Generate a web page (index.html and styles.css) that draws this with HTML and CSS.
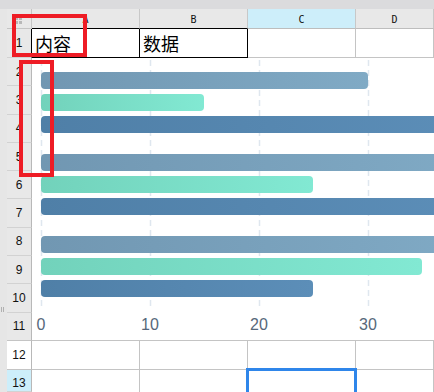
FILE: index.html
```html
<!DOCTYPE html>
<html lang="zh">
<head>
    <meta charset="UTF-8">
    <meta name="viewport" content="width=device-width, initial-scale=1.0">
    <title>数据表</title>
    <link rel="stylesheet" href="styles.css">
</head>
<body>
    <div class="topbar"></div>

    <div class="sheet">
        <div class="strip"><span class="grip"></span></div>

        <!-- column headers -->
        <div class="corner">
            <span class="handle"><i></i><i></i><i></i><i></i></span>
        </div>
        <div class="col-head boxed-top">A</div>
        <div class="col-head boxed-top">B</div>
        <div class="col-head active">C</div>
        <div class="col-head">D</div>

        <!-- row 1 -->
        <div class="row-head boxed-left">1</div>
        <div class="cell boxed">内容</div>
        <div class="cell boxed">数据</div>
        <div class="cell"></div>
        <div class="cell"></div>

        <!-- rows 2-11, chart sits over the cells -->
        <div class="row-head r2">2</div>
        <div class="row-head r3">3</div>
        <div class="row-head r4">4</div>
        <div class="row-head r5">5</div>
        <div class="row-head r6">6</div>
        <div class="row-head r7">7</div>
        <div class="row-head r8">8</div>
        <div class="row-head r9">9</div>
        <div class="row-head r10">10</div>
        <div class="row-head r11">11</div>

        <div class="chart">
            <svg width="402" height="283" viewBox="0 0 402 283">
                <defs>
                    <linearGradient id="g-slate"><stop offset="0" stop-color="#7197b2"/><stop offset="1" stop-color="#80aac5"/></linearGradient>
                    <linearGradient id="g-mint"><stop offset="0" stop-color="#72d2bb"/><stop offset="1" stop-color="#82e9d3"/></linearGradient>
                    <linearGradient id="g-steel"><stop offset="0" stop-color="#4f7fa7"/><stop offset="1" stop-color="#5c8eb8"/></linearGradient>
                </defs>
                <g class="gridlines">
                    <line x1="9.5" y1="2" x2="9.5" y2="248"/>
                    <line x1="118.5" y1="2" x2="118.5" y2="248"/>
                    <line x1="227.5" y1="2" x2="227.5" y2="248"/>
                    <line x1="336.5" y1="2" x2="336.5" y2="248"/>
                </g>
                <g>
                    <rect x="9" y="14" width="327" height="17" rx="4" fill="url(#g-slate)"/>
                    <rect x="9" y="36" width="163" height="17" rx="4" fill="url(#g-mint)"/>
                    <rect x="9" y="58" width="430" height="17" rx="4" fill="url(#g-steel)"/>

                    <rect x="9" y="96" width="430" height="17" rx="4" fill="url(#g-slate)"/>
                    <rect x="9" y="118" width="272" height="17" rx="4" fill="url(#g-mint)"/>
                    <rect x="9" y="140" width="430" height="17" rx="4" fill="url(#g-steel)"/>

                    <rect x="9" y="178" width="430" height="17" rx="4" fill="url(#g-slate)"/>
                    <rect x="9" y="200" width="381" height="17" rx="4" fill="url(#g-mint)"/>
                    <rect x="9" y="222" width="272" height="17" rx="4" fill="url(#g-steel)"/>
                </g>
                <g class="axis">
                    <text x="9" y="272">0</text>
                    <text x="118" y="272">10</text>
                    <text x="227" y="272">20</text>
                    <text x="336" y="272">30</text>
                </g>
            </svg>
        </div>

        <!-- row 12 -->
        <div class="row-head plain">12</div>
        <div class="cell"></div>
        <div class="cell"></div>
        <div class="cell"></div>
        <div class="cell"></div>

        <!-- row 13, cut by the window -->
        <div class="row-head active">13</div>
        <div class="cell open"></div>
        <div class="cell open"></div>
        <div class="cell open selected"></div>
        <div class="cell open"></div>
    </div>

    <div class="mark mark-head"></div>
    <div class="mark mark-axis"></div>
</body>
</html>
```

FILE: styles.css
```css
* {
    margin: 0;
    padding: 0;
    box-sizing: border-box;
}
body {
    background: white;
    width: 434px;
    height: 392px;
    overflow: hidden;
    position: relative;
    font-family: "Liberation Sans", Arial, sans-serif;
}
.topbar {
    height: 9px;
    background: #dbdbdd;
}
.sheet {
    display: grid;
    grid-template-columns: 7px 25px 108px 108px 108px 1fr;
    grid-template-rows: 20px 29px repeat(10, 28.3px) 29px 22px;
}
.strip {
    grid-column: 1;
    grid-row: 1 / -1;
    background: #e6e6e6;
    padding-top: 298px;
    padding-left: 1px;
}
.grip {
    display: block;
    width: 3px;
    height: 5px;
    border-left: 1px solid #b0b0b0;
    border-right: 1px solid #b0b0b0;
}
.corner {
    background: #e8e8e8;
    border-right: 1px solid #c4c4c4;
    border-bottom: 1px solid #c4c4c4;
    padding: 8px 0 0 8px;
}
.handle {
    display: grid;
    grid-template-columns: 3px 3px;
    gap: 1px;
}
.handle i {
    display: block;
    height: 3px;
    background: #b8b8b8;
}
.col-head {
    background: #e8e8e8;
    border-right: 1px solid #c8c8c8;
    border-bottom: 1px solid #bdbdbd;
    font-family: "DejaVu Sans Mono", monospace;
    font-size: 10px;
    color: #111;
    display: flex;
    align-items: center;
    justify-content: center;
    padding-top: 2px;
}
.col-head.active {
    background: #cdeefa;
}
.boxed-top {
    border-bottom-color: #000;
}
.row-head {
    grid-column: 2;
    background: #e8e8e8;
    border-right: 1px solid #b8b8b8;
    border-bottom: 1px solid #d2d2d2;
    font-size: 12px;
    color: #111;
    display: flex;
    align-items: center;
    justify-content: center;
}
.row-head.plain {
    background: #fff;
    border-bottom-color: #c4c4c4;
}
.row-head.active {
    background: #cdeefa;
    padding-top: 6px;
}
.boxed-left {
    border-right-color: #000;
}
.r11 {
    border-bottom-color: #c4c4c4;
}
.cell {
    border-right: 1px solid #c4c4c4;
    border-bottom: 1px solid #c4c4c4;
    font-family: "Noto Sans CJK SC", sans-serif;
    font-size: 18px;
    line-height: 1;
    padding: 5px 0 0 3px;
}
.cell.open {
    border-bottom: 0;
}
.cell.boxed {
    border-color: #000;
}
.cell.selected {
    position: relative;
}
.cell.selected::after {
    content: "";
    position: absolute;
    top: -2px;
    left: -2px;
    right: -2px;
    bottom: 0;
    border: 3px solid #2f86ea;
    border-bottom: 0;
}
.chart {
    grid-column: 3 / -1;
    grid-row: 3 / 13;
    background: #fff;
    border-bottom: 1px solid #c4c4c4;
    overflow: hidden;
}
.chart svg {
    display: block;
}
.gridlines line {
    stroke: #dfe7ef;
    stroke-width: 1.5;
    stroke-dasharray: 6 4;
}
.axis text {
    font-family: "Liberation Sans", Arial, sans-serif;
    font-size: 16px;
    fill: #57687a;
    text-anchor: middle;
}

/* red annotation boxes */
.mark {
    position: absolute;
    border: 4px solid #ee1c25;
}
.mark-head {
    left: 12px;
    top: 14px;
    width: 75px;
    height: 43px;
}
.mark-axis {
    left: 19px;
    top: 60px;
    width: 35px;
    height: 117px;
}
```
